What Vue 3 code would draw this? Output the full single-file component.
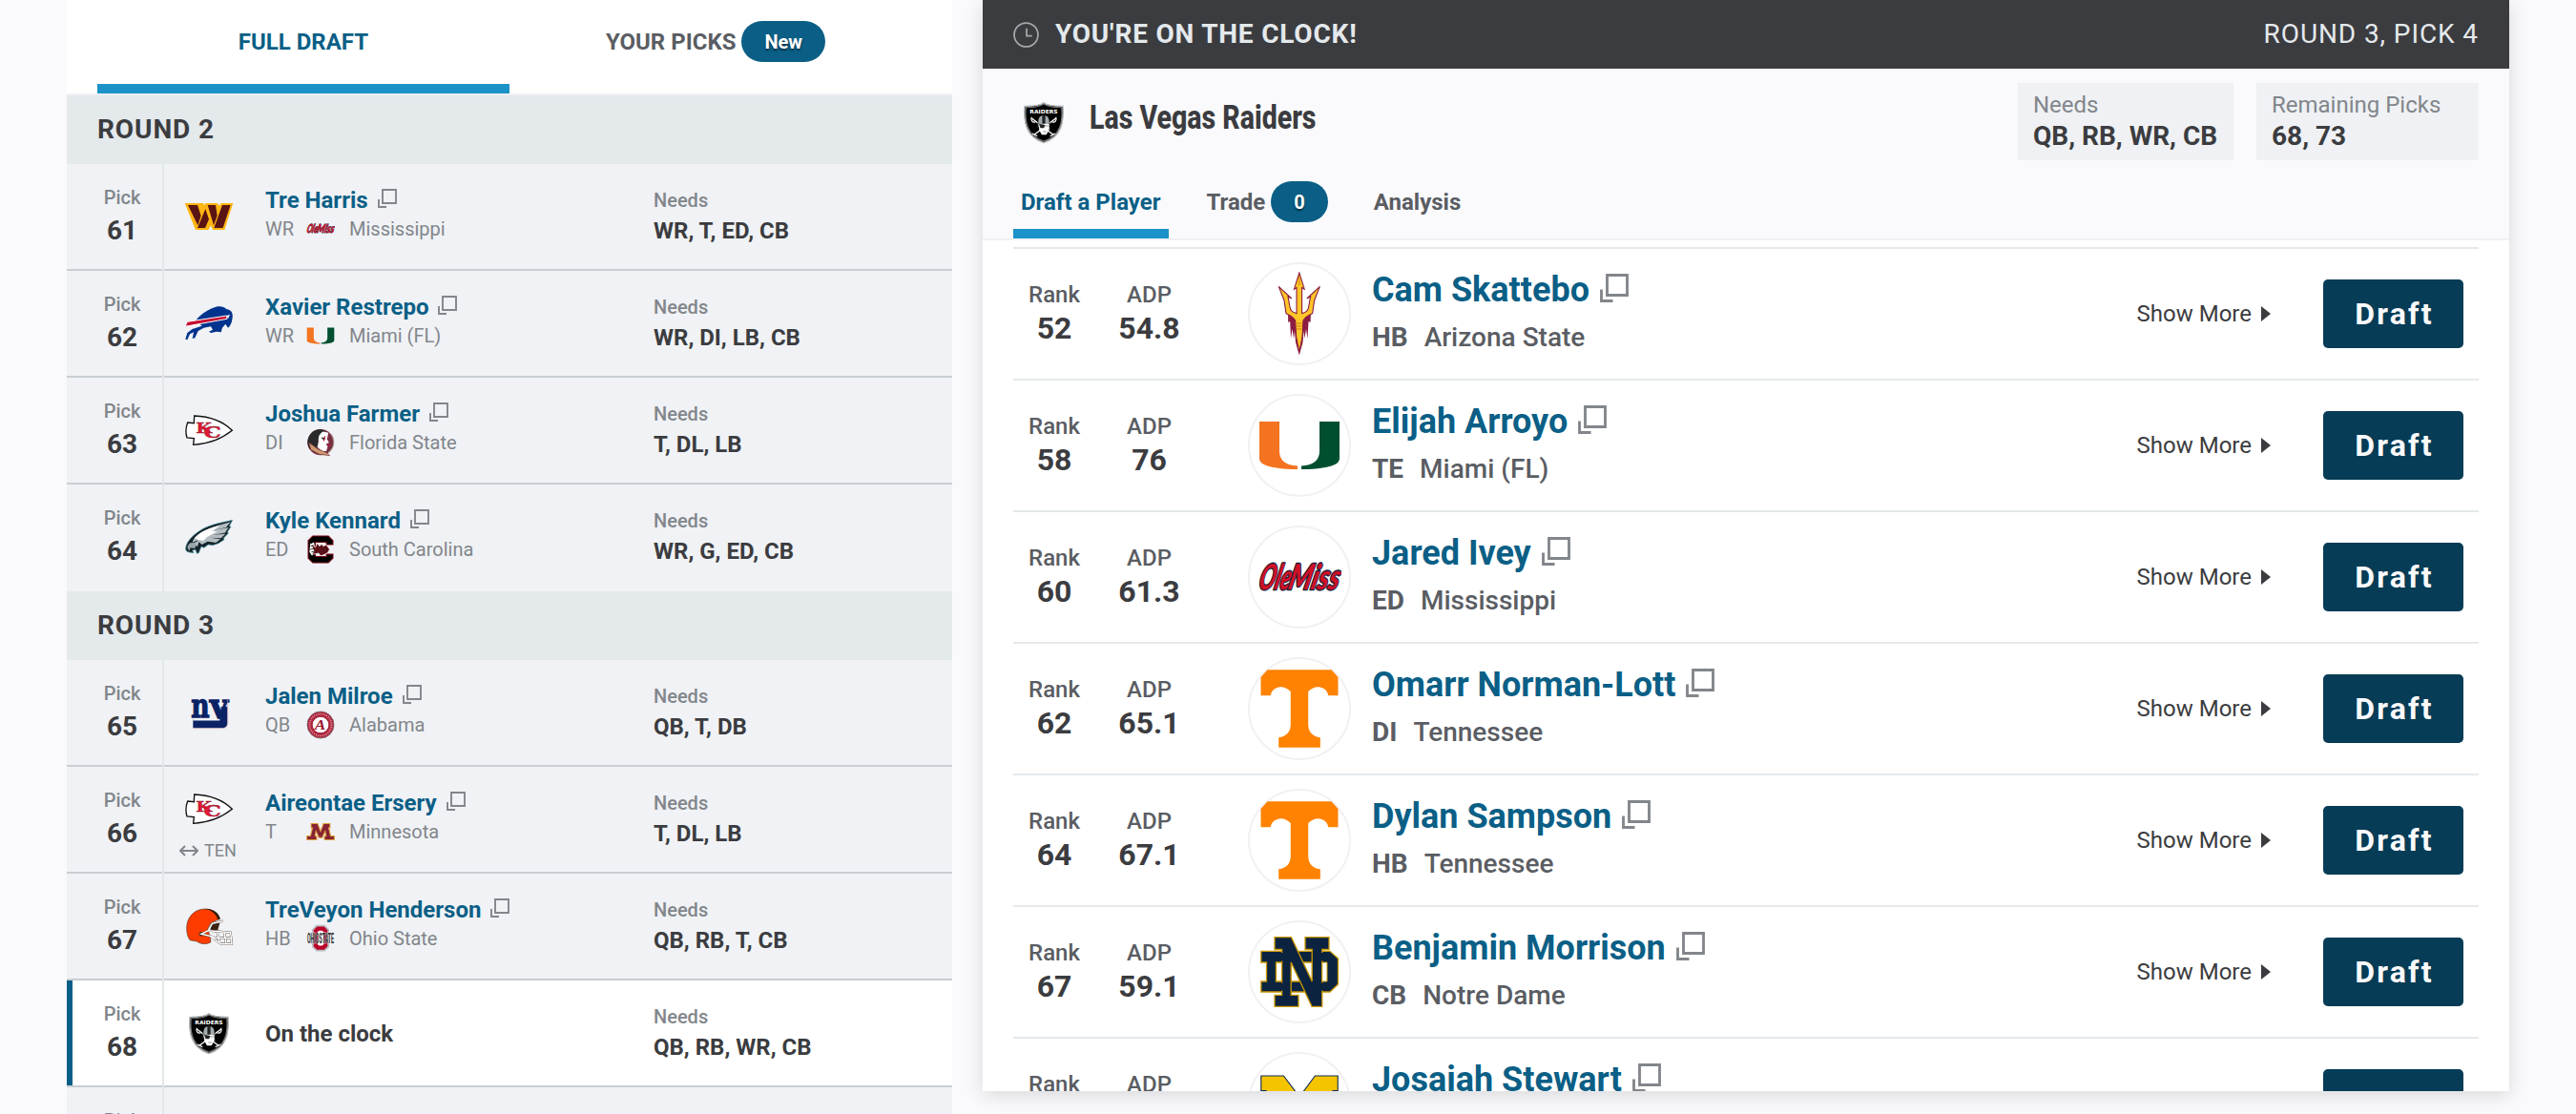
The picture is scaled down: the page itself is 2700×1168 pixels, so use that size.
<template>
  <div class="page">
    <!-- Draft order -->
    <aside class="board">
      <nav class="board-tabs">
        <button class="board-tab active">FULL DRAFT</button>
        <button class="board-tab">YOUR PICKS <span class="badge">New</span></button>
      </nav>

      <section v-for="round in rounds" :key="round.number" class="round">
        <h2 class="round-title">ROUND {{ round.number }}</h2>
        <div
          v-for="pick in round.picks"
          :key="pick.number"
          class="pick"
          :class="{ current: pick.current }"
        >
          <div class="pick-number">
            <span>Pick</span>
            <strong v-if="pick.team">{{ pick.number }}</strong>
          </div>
          <div class="pick-team" :class="{ traded: pick.from }">
            <svg v-if="pick.team" class="team-logo" viewBox="0 0 156 156" v-html="logos[pick.team]"></svg>
            <span v-if="pick.from" class="trade">
              <svg width="20" height="12" viewBox="0 0 20 12">
                <path d="M1 6H19M6 1L1 6L6 11M14 1L19 6L14 11" fill="none" stroke="#82868b" stroke-width="2" />
              </svg>
              {{ pick.from }}
            </span>
          </div>
          <div v-if="pick.player" class="pick-player">
            <a class="player-link">
              {{ pick.player }}
              <svg class="popup" viewBox="0 0 20 20"><path d="M5 1H19V15H5ZM1 11V19H9" /></svg>
            </a>
            <div class="pick-school">
              <span class="position">{{ pick.position }}</span>
              <svg class="school-logo" viewBox="0 0 88 88" v-html="logos[pick.logo]"></svg>
              <span>{{ pick.school }}</span>
            </div>
          </div>
          <div v-else class="pick-clock">{{ pick.current ? "On the clock" : "" }}</div>
          <div class="pick-needs">
            <template v-if="pick.needs">
              <span>Needs</span>
              <strong>{{ pick.needs }}</strong>
            </template>
          </div>
        </div>
      </section>
    </aside>

    <!-- Selection panel -->
    <main class="panel">
      <header class="clock-bar">
        <svg class="clock" viewBox="0 0 26 26">
          <path d="M13 1A12 12 0 1 1 13 25A12 12 0 1 1 13 1ZM13.5 6.5V14H19" fill="none" stroke="#a5a8ab" stroke-width="1.7" />
        </svg>
        <strong>YOU'RE ON THE CLOCK!</strong>
        <span class="clock-pick">ROUND 3, PICK 4</span>
      </header>

      <div class="team-head">
        <div class="team-row">
          <svg class="head-logo" viewBox="0 0 156 156" v-html="logos.raiders"></svg>
          <h1 class="team-name"><span>Las Vegas Raiders</span></h1>
          <div class="info needs">
            <span>Needs</span>
            <strong>QB, RB, WR, CB</strong>
          </div>
          <div class="info remaining">
            <span>Remaining Picks</span>
            <strong>68, 73</strong>
          </div>
        </div>
        <nav class="panel-tabs">
          <button class="panel-tab active">Draft a Player</button>
          <button class="panel-tab">Trade <span class="badge count">0</span></button>
          <button class="panel-tab">Analysis</button>
        </nav>
      </div>

      <div class="players">
        <div v-for="p in players" :key="p.name" class="player">
          <div class="stat rank">
            <span>Rank</span>
            <strong>{{ p.rank }}</strong>
          </div>
          <div class="stat adp">
            <span>ADP</span>
            <strong>{{ p.adp }}</strong>
          </div>
          <div class="avatar">
            <svg viewBox="0 0 88 88" v-html="logos[p.logo]"></svg>
          </div>
          <div class="player-info">
            <a class="player-name">
              {{ p.name }}
              <svg class="popup" viewBox="0 0 20 20"><path d="M5 1H19V15H5ZM1 11V19H9" /></svg>
            </a>
            <div v-if="p.school" class="player-school">
              <strong>{{ p.position }}</strong>
              <span>{{ p.school }}</span>
            </div>
          </div>
          <button v-if="p.school" class="more">
            Show More
            <svg width="10" height="16" viewBox="0 0 10 16"><path d="M0 0L10 8L0 16Z" fill="#3b3c40" /></svg>
          </button>
          <button class="draft">Draft</button>
        </div>
      </div>
    </main>
  </div>
</template>

<script setup>
import { ref } from "vue";

const rounds = ref([
  {
    number: 2,
    picks: [
      { number: 61, team: "commanders", player: "Tre Harris", position: "WR", logo: "olemiss", school: "Mississippi", needs: "WR, T, ED, CB" },
      { number: 62, team: "bills", player: "Xavier Restrepo", position: "WR", logo: "miami", school: "Miami (FL)", needs: "WR, DI, LB, CB" },
      { number: 63, team: "chiefs", player: "Joshua Farmer", position: "DI", logo: "fsu", school: "Florida State", needs: "T, DL, LB" },
      { number: 64, team: "eagles", player: "Kyle Kennard", position: "ED", logo: "southcarolina", school: "South Carolina", needs: "WR, G, ED, CB" },
    ],
  },
  {
    number: 3,
    picks: [
      { number: 65, team: "giants", player: "Jalen Milroe", position: "QB", logo: "alabama", school: "Alabama", needs: "QB, T, DB" },
      { number: 66, team: "chiefs", from: "TEN", player: "Aireontae Ersery", position: "T", logo: "minnesota", school: "Minnesota", needs: "T, DL, LB" },
      { number: 67, team: "browns", player: "TreVeyon Henderson", position: "HB", logo: "ohiostate", school: "Ohio State", needs: "QB, RB, T, CB" },
      { number: 68, team: "raiders", current: true, needs: "QB, RB, WR, CB" },
      { number: 69 },
    ],
  },
]);

const players = ref([
  { rank: 52, adp: "54.8", logo: "asu", name: "Cam Skattebo", position: "HB", school: "Arizona State" },
  { rank: 58, adp: "76", logo: "miami", name: "Elijah Arroyo", position: "TE", school: "Miami (FL)" },
  { rank: 60, adp: "61.3", logo: "olemiss", name: "Jared Ivey", position: "ED", school: "Mississippi" },
  { rank: 62, adp: "65.1", logo: "tennessee", name: "Omarr Norman-Lott", position: "DI", school: "Tennessee" },
  { rank: 64, adp: "67.1", logo: "tennessee", name: "Dylan Sampson", position: "HB", school: "Tennessee" },
  { rank: 67, adp: "59.1", logo: "notredame", name: "Benjamin Morrison", position: "CB", school: "Notre Dame" },
  { logo: "michigan", name: "Josaiah Stewart" },
]);

// NFL logos use a 156 box, college logos an 88 box
const logos = {
  commanders: `
    <path d="M2 36H60L64 42L68 36H104L111 44L116 36H154L127 120H90L84 106L76 120H36Z" fill="#ffb612" />
    <path d="M12 42H42L53 76L43 106ZM67 54L78 86L66 114H42ZM74 42H99L104 76L93 106ZM120 42H146L122 114H94Z" fill="#5a1414" />
    <path d="M68 50L84 96" stroke="#ffb612" stroke-width="3" />`,
  bills: `
    <path d="M36 70C52 48 74 36 90 30C106 22 124 24 134 34C148 36 154 46 152 60C150 76 146 86 138 92L130 80L120 92L116 106L102 104L84 108L78 104L90 98L84 88L62 92L44 102L34 124L26 126L30 106L18 112L10 130L4 128L10 108L26 96L56 86Z" fill="#00338d" />
    <path d="M10 73L134 54L135 64L3 88Z" fill="#c60c30" stroke="#fff" stroke-width="3" />
    <path d="M134 54L144 50L138 64Z" fill="#fff" />`,
  chiefs: `
    <path d="M32 33C82 35 122 50 151 79C122 102 82 122 29 124L31 104L9 102C4 86 5 70 11 54L31 56Z" fill="#fff" stroke="#111" stroke-width="4" />
    <g font-family="'DejaVu Serif', serif" font-weight="700" fill="#e31837" stroke="#7a1a26" stroke-width="1">
      <text x="37" y="87" font-size="46" textLength="50" lengthAdjust="spacingAndGlyphs">K</text>
      <text x="61" y="102" font-size="50" textLength="56" lengthAdjust="spacingAndGlyphs">C</text>
    </g>`,
  eagles: `
    <path d="M5 112C8 92 26 74 50 58C80 38 116 34 152 25L142 44L147 46L136 62L139 66L124 82L126 86L108 98L90 104L76 102L62 112L54 108L46 128L40 130L36 118L26 120L30 128L16 126C8 126 4 120 5 112Z" fill="#14242a" stroke="#4a98a8" stroke-width="2" />
    <path d="M28 88C46 62 86 46 146 31L132 48L92 57L140 48L128 65L90 71L130 68L116 82L82 80L114 85L100 96L74 92L56 102L46 94L42 108L26 100Z" fill="#b4bec2" />
    <path d="M32 82C54 58 84 48 112 43L88 60L104 61L72 78L60 90L44 86Z" fill="#fff" />
    <path d="M10 110C14 96 24 92 38 100L34 114L20 112L16 122Z" fill="#98a6ac" />
    <path d="M28 96L42 90" stroke="#14242a" stroke-width="3" />`,
  giants: `
    <g font-family="'DejaVu Serif', serif" font-weight="700" fill="#0b2265" stroke="#0b2265" stroke-width="4">
      <text x="22" y="94" font-size="108" textLength="58" lengthAdjust="spacingAndGlyphs">n</text>
      <text x="80" y="94" font-size="108" textLength="58" lengthAdjust="spacingAndGlyphs">y</text>
    </g>
    <path d="M28 99H116V60H136V110C136 121 130 127 118 127H28Z" fill="#0b2265" />
    <path d="M28 101H112" stroke="#f0f2f5" stroke-width="5" />
    <path d="M28 128H120C131 128 137 122 137 110V34" fill="none" stroke="#c8a0b0" stroke-width="2" />`,
  browns: `
    <path d="M8 84C8 50 32 24 66 24C90 24 106 38 110 56L84 68L74 86L80 106L84 128C72 136 54 136 40 126L18 122C10 110 8 98 8 84Z" fill="#ff3c00" stroke="#5a3a26" stroke-width="2" />
    <path d="M66 24C88 28 102 42 106 58L114 56C110 36 90 22 66 24Z" fill="#311d00" />
    <path d="M84 70L112 68L106 90L84 96Z" fill="#3a2411" />
    <circle cx="54" cy="103" r="7" fill="#4a2411" />
    <path d="M122 62L88 70L76 92L54 103L92 112M76 92L146 98L150 134H116L88 114L146 116M104 98L112 130M126 98L132 132" fill="none" stroke="#4a3a33" stroke-width="6.5" />
    <path d="M122 62L88 70L76 92L54 103L92 112M76 92L146 98L150 134H116L88 114L146 116M104 98L112 130M126 98L132 132" fill="none" stroke="#fff" stroke-width="4.5" />`,
  raiders: `
    <path d="M78 17C88 25 108 28 138 28C142 78 134 124 78 143C22 124 14 78 18 28C48 28 68 25 78 17Z" fill="#000" stroke="#b4b9bc" stroke-width="4" />
    <path d="M78 21C90 29 108 32 134 32C138 78 130 120 78 138C26 120 18 78 22 32C48 32 66 29 78 21Z" fill="none" stroke="#fff" stroke-width="1.5" />
    <text x="34" y="52" font-family="'DejaVu Sans', sans-serif" font-weight="700" font-size="17" fill="#fff" textLength="88" lengthAdjust="spacingAndGlyphs">RAIDERS</text>
    <path d="M40 66L108 118M116 66L48 118" stroke="#fff" stroke-width="4" />
    <path d="M40 62C36 72 42 80 52 78M116 62C120 72 114 80 104 78M42 114L58 122M114 114L98 122" fill="none" stroke="#fff" stroke-width="3.5" />
    <path d="M60 84C58 62 68 56 78 56C88 56 98 62 96 84L98 104L88 102L78 84L64 90L58 100Z" fill="#a5acaf" stroke="#000" stroke-width="2" />
    <path d="M62 84H94V104L86 118H72L64 104Z" fill="#fff" />
    <path d="M64 84L82 88L78 96H68ZM84 90H92M76 108H86M74 56H82V82H74Z" fill="#222" stroke="#222" stroke-width="1.5" />`,
  olemiss: `
    <g transform="translate(14 0) skewX(-14)" font-family="Lato, sans-serif" font-weight="900" font-style="italic" fill="#ce1126" stroke="#14213d" stroke-width="2.6" paint-order="stroke" stroke-linejoin="round">
      <text x="0" y="57" font-size="37" textLength="33" lengthAdjust="spacingAndGlyphs">Ole</text>
      <text x="31" y="57" font-size="37" textLength="53" lengthAdjust="spacingAndGlyphs">Miss</text>
    </g>`,
  miami: `
    <path d="M2 19H23V50C23 60 30 65 42 65.5V69C25 69 12 67 5 63C3 61.5 2 60 2 57Z" fill="#f47321" />
    <path d="M86 19H65V50C65 60 58 65 46 65.5V69C63 69 76 67 83 63C85 61.5 86 60 86 57Z" fill="#005030" />`,
  fsu: `
    <circle cx="44" cy="43" r="40" fill="#782f40" />
    <path d="M44 3A40 40 0 0 0 10 64L40 60L36 40L58 8Z" fill="#2b2a2a" />
    <path d="M52 10C40 16 36 28 38 40L34 58L50 72L62 70L66 56L60 50L70 44L64 34L68 14Z" fill="#fff" />
    <path d="M46 28L58 29L56 36L50 34Z" fill="#222" />
    <path d="M8 44L36 64L64 76L72 84L40 80L14 66Z" fill="#cd9a6e" stroke="#782f40" stroke-width="2" />
    <path d="M58 24L54 40M66 46L72 56" fill="none" stroke="#c41e3a" stroke-width="3" />
    <path d="M76 18A40 40 0 0 1 68 75" fill="none" stroke="#a8968a" stroke-width="3" />`,
  southcarolina: `
    <path d="M20 3H68L82 17V29H62V22H28V66H62V59H82V71L68 85H20L6 71V17Z" fill="#000" stroke="#73000a" stroke-width="3" />
    <path d="M12 28L24 22L28 46L18 64L10 52Z" fill="#fff" />
    <path d="M14 26L24 50L16 60L38 56L44 64L56 60L66 54L72 44L62 30L52 34L48 28L40 34L34 24L28 38Z" fill="#5c0f16" stroke="#fff" stroke-width="2" />
    <path d="M14 34L24 32M12 44L24 42M16 52L26 50M50 42L60 48" stroke="#222" stroke-width="2.5" />`,
  alabama: `
    <circle cx="44" cy="44" r="41" fill="#b3293f" stroke="#75646a" stroke-width="2.5" />
    <circle cx="44" cy="44" r="33.5" fill="none" stroke="#e0a5ae" stroke-width="5" stroke-dasharray="2.5 4" />
    <circle cx="44" cy="44" r="26" fill="#fff" stroke="#9e1b32" stroke-width="3" />
    <text x="26" y="59" font-family="'Liberation Serif', serif" font-weight="700" font-style="italic" font-size="44" fill="#9e1b32" textLength="34" lengthAdjust="spacingAndGlyphs">A</text>`,
  minnesota: `
    <path d="M15 19H35L44 43L53 19H73V32H69L75 57H86V69H56V57H61L58 42L49 62H39L30 42L27 57H32V69H2V57H13L19 32H15Z" fill="#862334" stroke="#e0a03c" stroke-width="3" />`,
  ohiostate: `
    <path d="M32 5H56L68 17V69L56 81H32L20 69V17Z" fill="#bb0029" stroke="#b9bec2" stroke-width="5" />
    <rect x="35" y="20" width="18" height="46" rx="6" fill="#fff" />
    <text x="3" y="60" font-family="Roboto, sans-serif" font-weight="700" font-size="44" fill="#333" stroke="#e8e8ea" stroke-width="3" paint-order="stroke" textLength="82" lengthAdjust="spacingAndGlyphs">OHIOSTATE</text>`,
  asu: `
    <path d="M32 42C36 48 52 48 56 42L55.5 53L53.5 52L52.5 70L51 60L49.5 70L48.5 62L47.5 74L43.8 87.5L40 74L39 62L38 70L36.5 60L35 70L34.2 52L32.2 53Z" fill="#8c1d40" />
    <path d="M43.8 1L49.2 18.2L46.6 16.6V43.6C50.5 42.8 53 41 53.6 37L55.6 26L51.8 28L65.4 15.4L59.6 30L57.6 43.6C54 45.6 50 47 48 51L47 68L43.8 84L40.6 68L39.6 51C37.6 47 33.6 45.6 30 43.6L28 30L22.2 15.4L35.8 28L32 26L34 37C34.6 41 37.1 42.8 41 43.6V16.6L38.4 18.2Z" fill="#ffc627" stroke="#8c1d40" stroke-width="1.1" />
    <path d="M40.5 54H47M40.5 57H47M40.7 60H46.9M43.8 4V14" stroke="#c9771c" stroke-width=".9" />`,
  tennessee: `
    <path d="M10.5 3.3H77.5L84.5 11V30.3H74.3C73 21 61 17.5 53.2 26V60C53.2 68 57 73 65.8 74.3V84.8H22.2V74.3C31 73 34.8 68 34.8 60V26C27 17.5 15 21 13.7 30.3H3.5V11Z" fill="#ff8200" />`,
  notredame: `
    <g fill="#0c2340" stroke="#c99700" stroke-width="1.3">
      <path d="M3.8 22.3H76L84.5 30V57L76 65H3.8V54H9.5V34H3.8ZM19.5 34V54H67V34Z" fill-rule="evenodd" />
      <path d="M18 7.7H35.5L57.2 54V20.5H50V7.7H75V20.5H67.8V80.3H57L35.2 34V68.3H43V80.3H18V68.3H25.6V20.5H18Z" />
    </g>
    <path d="M67.8 34H73V54H67.8Z" fill="#fff" stroke="#c99700" stroke-width="1" />
    <path d="M11 24H30V32.5H11ZM11 55.5H33V63.5H11ZM59 24H75V32.5H59ZM60 55.5H75V63.5H60Z" fill="#0c2340" />`,
  michigan: `
    <path d="M3.8 15H27.4L44 37L60.4 15H84.2V30.5H79V58H84.5V73H57V58H62V42L44 64L26 42V58H31V73H3.8V58H9V30.5H3.8Z" fill="#f5c400" stroke="#0c2c56" stroke-width="1.1" />`,
};
</script>

<style>
body {
  background: #fafafc;
  overflow: hidden;
}
</style>

<style scoped>
.page {
  display: flex;
  align-items: flex-start;
  gap: 32px;
  height: 1168px;
  padding-left: 70px;
  overflow: hidden;
  font-family: Roboto, "Liberation Sans", sans-serif;
  color: #3b3c40;
  background: #fafafc;
}

.page *,
.page *::before {
  box-sizing: border-box;
}

button {
  padding: 0;
  border: none;
  background: none;
  font: inherit;
  color: inherit;
  cursor: pointer;
}

strong {
  font-weight: 700;
}

.popup path {
  fill: none;
  stroke: #82868b;
  stroke-width: 1.9;
}

/* Draft order */
.board {
  width: 928px;
  flex: none;
}

.board-tabs {
  display: flex;
  height: 100px;
  padding: 0 32px;
  background: #fff;
  border-bottom: 2px solid #eff1f4;
}

.board-tab {
  display: flex;
  flex: 1;
  align-items: center;
  justify-content: center;
  gap: 6px;
  padding-bottom: 1px;
  border-bottom: 10px solid transparent;
  font-size: 24px;
  font-weight: 700;
  color: #5a5d63;
}

.board-tab.active {
  border-color: #1c93c8;
  color: #0b5f86;
}

.badge {
  display: inline-flex;
  align-items: center;
  height: 43px;
  padding: 0 24px;
  border-radius: 22px;
  background: #0b5f86;
  color: #fff;
  font-size: 20px;
  font-weight: 700;
  text-shadow: 0 2px 2px rgba(0, 0, 0, 0.5);
}

.round-title {
  height: 72px;
  margin: 0;
  padding-left: 32px;
  background: #e4e9ec;
  font-size: 28px;
  font-weight: 700;
  line-height: 72px;
  letter-spacing: 0.9px;
}

.pick {
  display: flex;
  height: 112px;
  background: #f0f2f5;
}

.pick > div {
  border-bottom: 2px solid #c8ced4;
}

.pick:last-child > div {
  border-color: transparent;
}

.pick.current {
  background: #fff;
  position: relative;
}

.pick.current::before {
  content: "";
  position: absolute;
  left: 0;
  top: 0;
  bottom: 2px;
  width: 6px;
  background: #075e86;
}

.pick-number {
  width: 100px;
  padding: 23px 0 0 16px;
  text-align: center;
}

.pick-number span {
  display: block;
  font-size: 20px;
  line-height: 24px;
  color: #82868b;
  font-weight: 500;
}

.pick-number strong {
  display: block;
  margin-top: 7px;
  font-size: 28px;
  line-height: 32px;
}

.pick .pick-team {
  display: flex;
  flex-direction: column;
  align-items: center;
  justify-content: center;
  width: 94px;
  box-shadow: -2px 0 0 #e2e7ea;
  margin-left: 2px;
}

.pick-team.traded {
  padding-top: 7px;
}

.team-logo {
  flex: none;
  width: 52px;
  height: 52px;
}

.trade {
  display: flex;
  align-items: center;
  gap: 6px;
  margin: 6px 2px 0 0;
  font-size: 18px;
  line-height: 24px;
  color: #82868b;
}

.pick-player {
  width: 419px;
  padding: 24px 0 0 12px;
}

.player-link {
  display: flex;
  align-items: center;
  font-size: 24px;
  font-weight: 700;
  line-height: 28px;
  color: #0b5f86;
}

.player-link .popup {
  width: 20px;
  height: 20px;
  margin: -4px 0 0 10px;
}

.pick-school {
  display: flex;
  align-items: center;
  height: 24px;
  margin-top: 4px;
  font-size: 20px;
  line-height: 24px;
  color: #82868b;
}

.position {
  width: 43px;
}

.school-logo {
  width: 30px;
  height: 30px;
  margin-right: 15px;
}

.pick-clock {
  width: 419px;
  padding-left: 12px;
  font-size: 24px;
  font-weight: 700;
  line-height: 112px;
}

.pick-needs {
  flex: 1;
  padding-top: 26px;
}

.pick-needs span {
  display: block;
  font-size: 20px;
  font-weight: 500;
  line-height: 24px;
  color: #82868b;
}

.pick-needs strong {
  display: block;
  margin-top: 6px;
  font-size: 24px;
  font-weight: 700;
  line-height: 28px;
}

/* Selection panel */
.panel {
  width: 1600px;
  height: 1144px;
  flex: none;
  background: #fff;
  box-shadow: 0 4px 20px rgba(0, 0, 0, 0.14);
  overflow: hidden;
}

.clock-bar {
  display: flex;
  align-items: center;
  height: 72px;
  padding: 0 32px;
  background: #3b3c40;
  color: #e4e9ec;
  font-size: 28px;
}

.clock {
  width: 27px;
  height: 27px;
  margin-right: 17px;
}

.clock-bar strong,
.clock-pick {
  padding-bottom: 1px;
}

.clock-bar strong {
  font-weight: 700;
  letter-spacing: 0.8px;
}

.clock-pick {
  margin-left: auto;
  letter-spacing: 0.9px;
}

.team-head {
  height: 180px;
  padding: 15px 32px 0;
  background: #fafafc;
  border-bottom: 2px solid #eff1f4;
}

.team-row {
  display: flex;
  align-items: center;
  height: 81px;
}

.head-logo {
  width: 52px;
  height: 52px;
  margin: 0 22px 0 6px;
}

/* condensed display face */
.team-name {
  width: 420px;
  margin: -8px auto 0 0;
  font-size: 35px;
  font-weight: 800;
  white-space: nowrap;
}

.team-name span {
  display: inline-block;
  transform: scaleX(0.815);
  transform-origin: left;
}

.info {
  height: 81px;
  padding: 9px 16px 0;
  background: #eff1f4;
}

.info span {
  display: block;
  font-size: 24px;
  line-height: 28px;
  color: #82868b;
}

.info strong {
  display: block;
  margin-top: 3px;
  font-size: 28px;
  font-weight: 700;
  line-height: 32px;
  white-space: nowrap;
}

.needs {
  width: 226px;
}

.remaining {
  width: 233px;
  margin-left: 24px;
}

.panel-tabs {
  display: flex;
  gap: 32px;
  height: 82px;
}

.panel-tab {
  display: flex;
  align-items: center;
  gap: 6px;
  padding: 15px 8px 0;
  border-bottom: 10px solid transparent;
  font-size: 24px;
  font-weight: 700;
  color: #5a5d63;
}

.panel-tab.active {
  border-color: #1c93c8;
  color: #0b5f86;
}

.players {
  padding: 7px 32px 0;
}

.player {
  display: flex;
  align-items: center;
  height: 138px;
  border-top: 2px solid #e4e9ec;
}

.stat {
  align-self: flex-start;
  padding-top: 34px;
  text-align: center;
}

.rank {
  width: 86px;
}

.adp {
  width: 113px;
}

.stat span {
  display: block;
  font-size: 24px;
  font-weight: 500;
  line-height: 28px;
  color: #5a5d63;
}

.stat strong {
  display: block;
  margin-top: 3px;
  font-size: 32px;
  line-height: 36px;
}

.avatar {
  display: flex;
  align-items: center;
  justify-content: center;
  width: 108px;
  height: 108px;
  margin: 0 22px 0 47px;
  border: 2px solid #f1f1f5;
  border-radius: 50%;
}

.avatar svg {
  flex: none;
  width: 88px;
  height: 88px;
}

.player-info {
  align-self: flex-start;
  padding-top: 21px;
}

.player-name {
  display: flex;
  align-items: center;
  font-size: 36px;
  font-weight: 700;
  line-height: 44px;
  color: #0b5f86;
}

.player-name .popup {
  width: 30px;
  height: 30px;
  margin: -4px 0 0 11px;
}

.player-school {
  display: flex;
  gap: 17px;
  margin-top: 11px;
  font-size: 28px;
  line-height: 34px;
  font-weight: 500;
  color: #5a5d63;
}

.player-school strong {
  font-weight: 700;
}

.more {
  display: flex;
  align-items: center;
  gap: 10px;
  margin-left: auto;
  font-size: 24px;
}

.draft {
  width: 147px;
  height: 72px;
  margin: 0 16px 0 55px;
  padding-left: 2px;
  border-radius: 5px;
  background: #073c56;
  color: #fafafc;
  font-size: 32px;
  font-weight: 700;
  letter-spacing: 2.2px;
}

.player:last-child .draft {
  margin-left: auto;
}
</style>
